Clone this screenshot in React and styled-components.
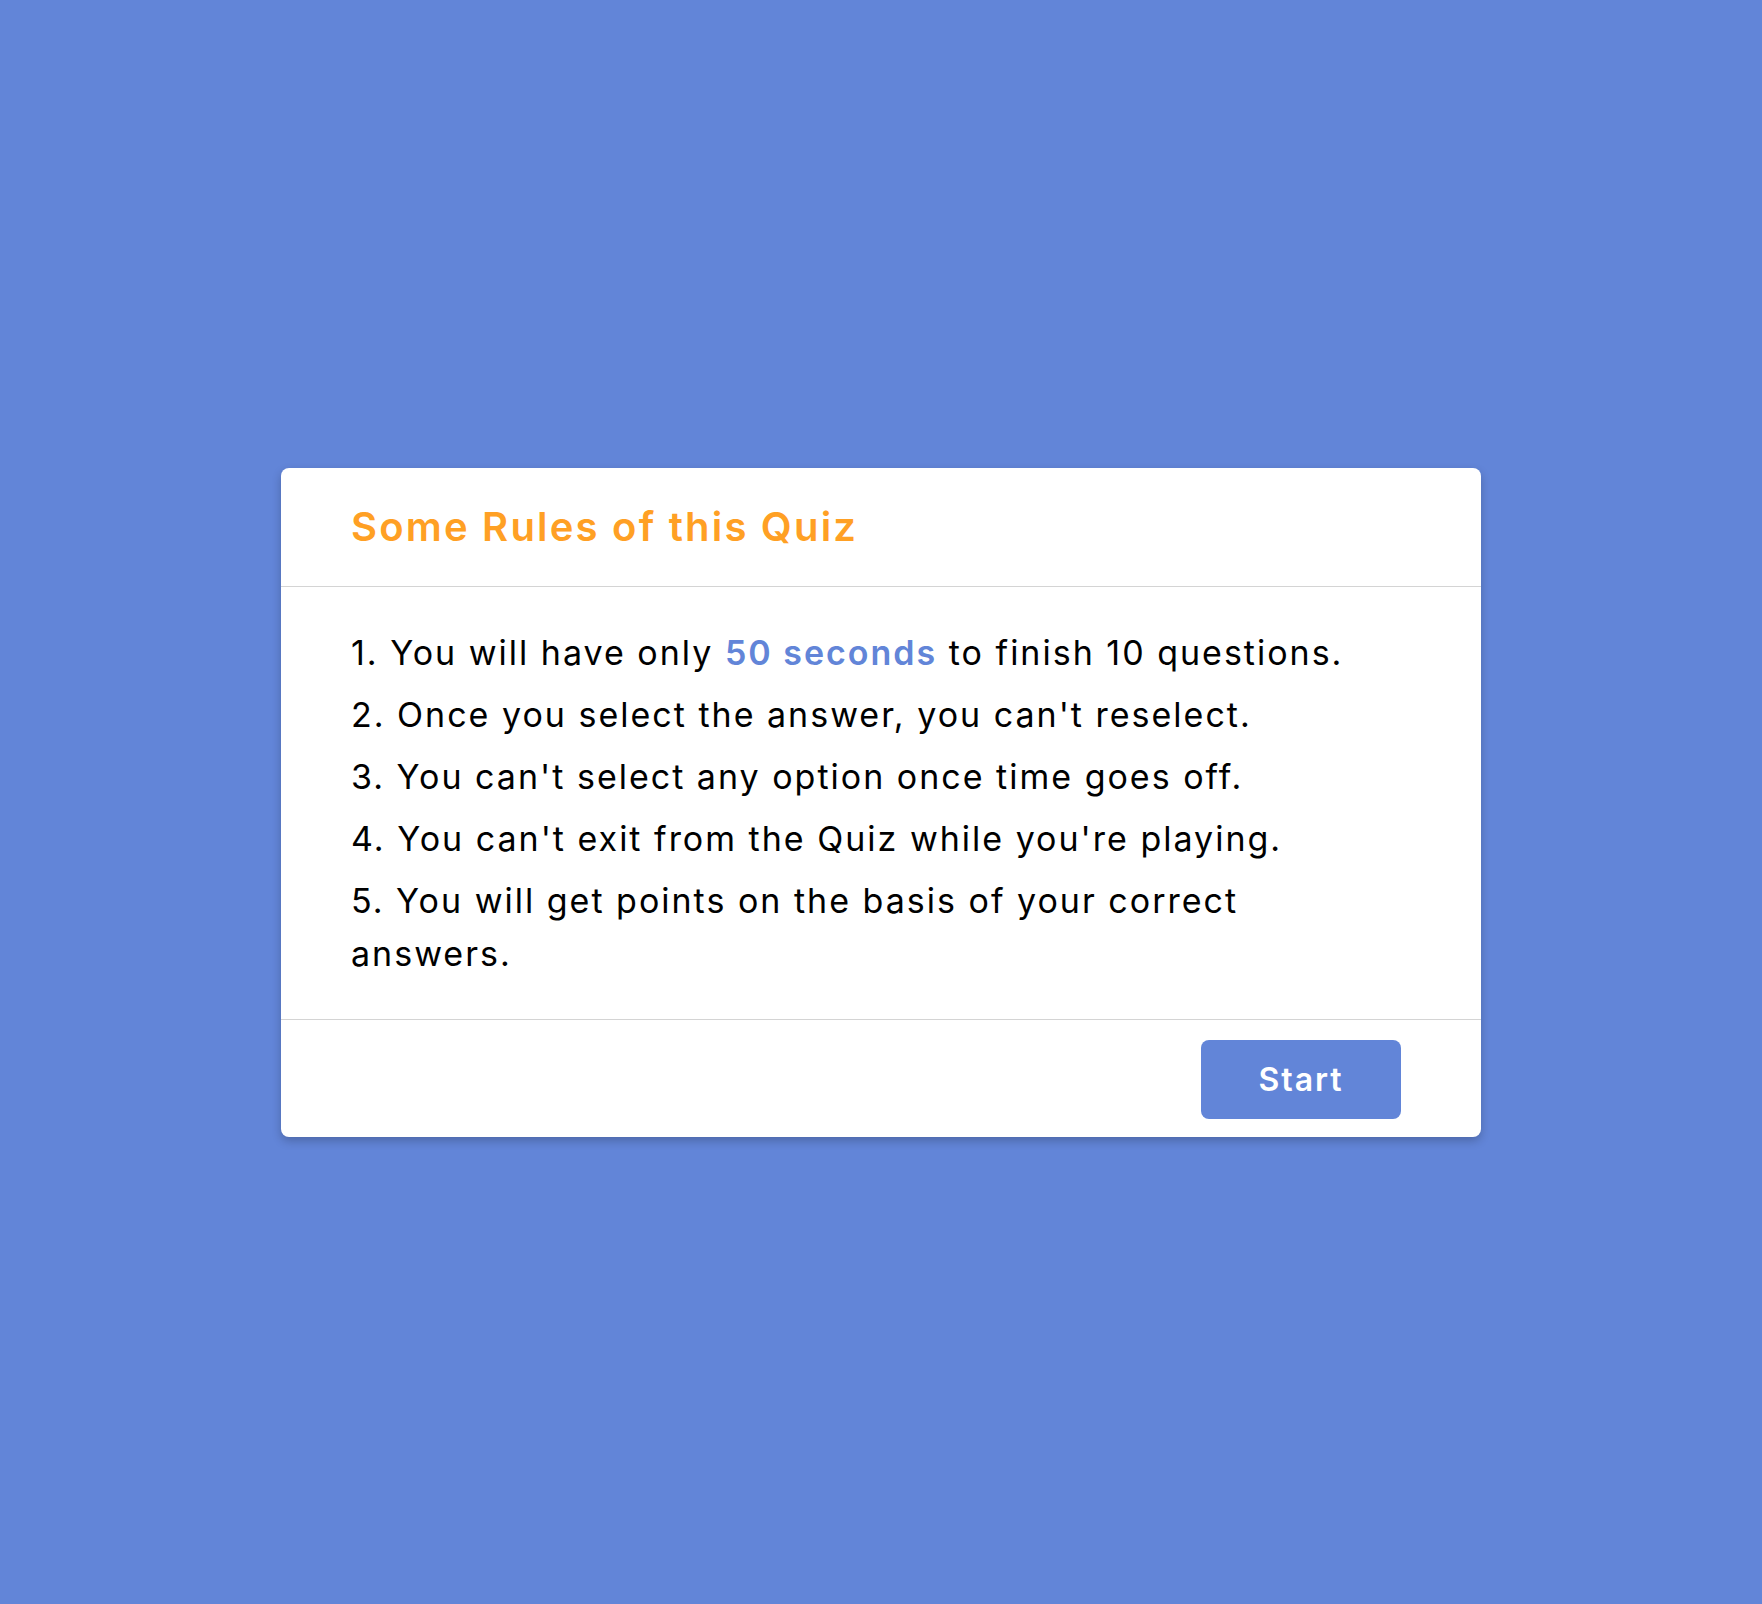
import React from "react";
import styled, { createGlobalStyle } from "styled-components";

const Global = createGlobalStyle`
  html, body { margin: 0; padding: 0; }
  body {
    background: #6285d8;
    font-family: Inter, "Noto Sans", sans-serif;
  }
`;

const Page = styled.div`
  min-height: 100vh;
  display: flex;
  align-items: center;
  justify-content: center;
`;

const Card = styled.section`
  width: 1200px;
  background: #ffffff;
  border-radius: 8px;
  box-shadow: 0 4px 10px rgba(0, 0, 0, 0.22);
  overflow: hidden;
`;

const Header = styled.header`
  height: 118px;
  display: flex;
  align-items: center;
  padding: 0 70px;
  border-bottom: 1px solid #d4d4d4;
`;

const Title = styled.h1`
  margin: 0;
  font-size: 40px;
  font-weight: 600;
  letter-spacing: 2.2px;
  color: #ffa024;
`;

const Body = styled.ol`
  list-style: none;
  margin: 0;
  padding: 39px 110px 39px 70px;
  display: flex;
  flex-direction: column;
  gap: 9px;
`;

const Rule = styled.li`
  font-size: 34px;
  line-height: 53px;
  letter-spacing: 2px;
  color: #000;
`;

const Highlight = styled.span`
  color: #6285d8;
  font-weight: 600;
`;

const Footer = styled.footer`
  height: 118px;
  border-top: 1px solid #d4d4d4;
  display: flex;
  justify-content: flex-end;
  align-items: center;
  padding: 2px 80px 0 0;
  box-sizing: border-box;
`;

const Button = styled.button`
  width: 200px;
  height: 79px;
  border: none;
  border-radius: 8px;
  background: #6285d8;
  color: #fff;
  font-family: inherit;
  font-size: 32px;
  font-weight: 600;
  letter-spacing: 2px;
  cursor: pointer;
`;

const rules = [
  "Once you select the answer, you can't reselect.",
  "You can't select any option once time goes off.",
  "You can't exit from the Quiz while you're playing.",
  "You will get points on the basis of your correct answers.",
];

export default function App() {
  return (
    <>
      <Global />
      <Page>
        <Card>
          <Header>
            <Title>Some Rules of this Quiz</Title>
          </Header>
          <Body>
            <Rule>
              1. You will have only <Highlight>50 seconds</Highlight> to finish 10 questions.
            </Rule>
            {rules.map((r, i) => (
              <Rule key={i}>{`${i + 2}. ${r}`}</Rule>
            ))}
          </Body>
          <Footer>
            <Button>Start</Button>
          </Footer>
        </Card>
      </Page>
    </>
  );
}
